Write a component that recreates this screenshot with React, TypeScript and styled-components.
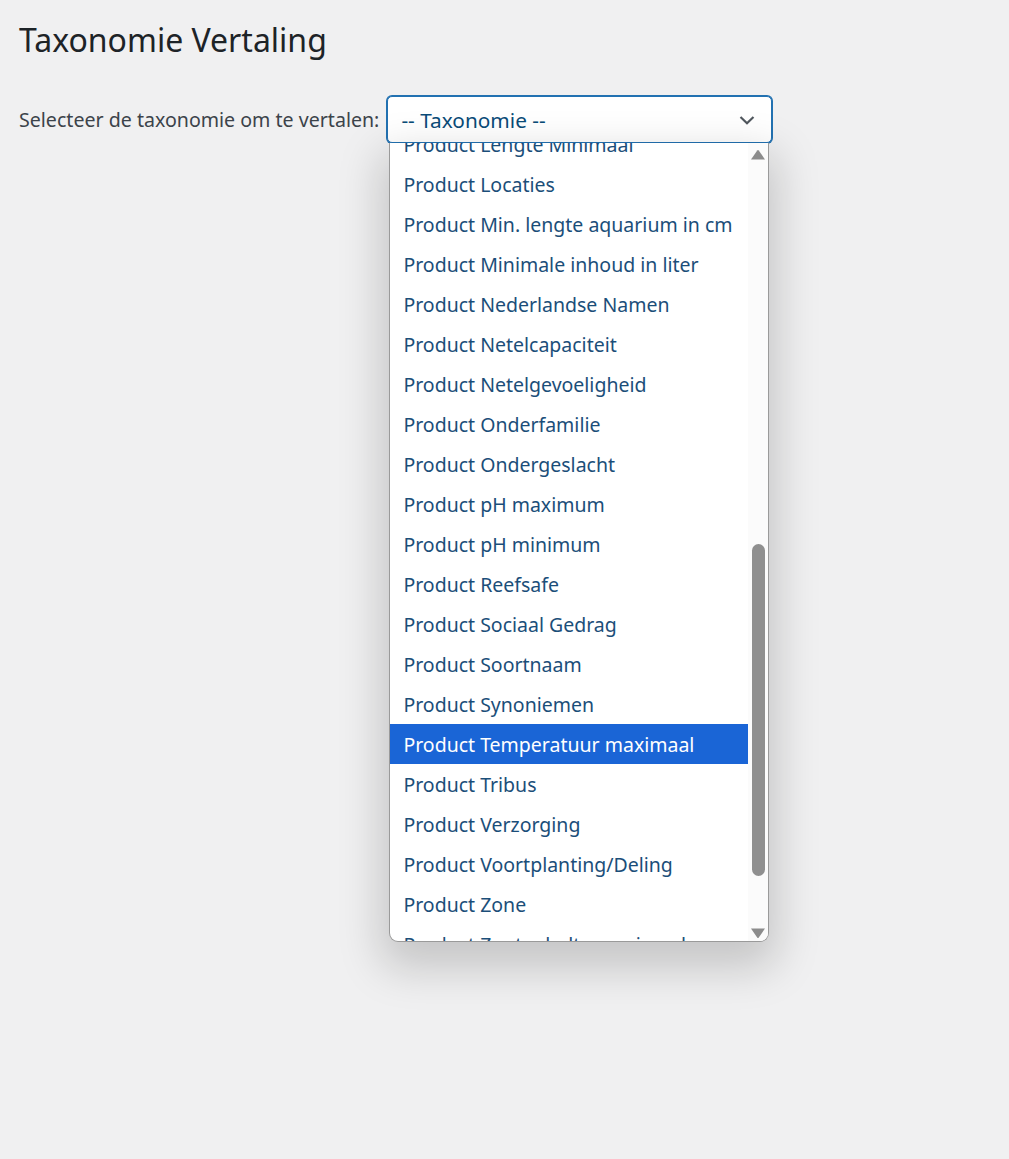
import React from 'react'
import styled, {createGlobalStyle} from 'styled-components'

const GlobalStyle = createGlobalStyle`
  html, body {
    margin: 0;
    padding: 0;
    background: #f0f0f1;
  }
  body {
    font-family: 'Noto Sans', 'Open Sans', sans-serif;
    color: #1d2327;
  }
`

const Page = styled.div`
  min-height: 1159px;
  padding: 12px 19px;
  box-sizing: border-box;
`

const Title = styled.h1`
  margin: 0;
  font-size: 32px;
  font-weight: 400;
  line-height: 56px;
  color: #1d2327;
`

const FormRow = styled.div`
  margin-top: 28px;
  display: flex;
  align-items: center;
  gap: 8px;
`

const Label = styled.label`
  font-size: 19.6px;
  color: #3c434a;
`

const SelectWrap = styled.div`
  position: relative;
  width: 385px;
`

const SelectBox = styled.div`
  height: 47px;
  box-sizing: border-box;
  display: flex;
  align-items: center;
  justify-content: space-between;
  padding: 0 14px 0 13px;
  background: #fff;
  border: 1px solid #2271b1;
  border-radius: 5px;
  box-shadow: 0 0 0 1px #2271b1;
  color: #0a4b78;
  font-size: 20.8px;
`

const Dropdown = styled.div`
  position: absolute;
  top: 100%;
  left: 2px;
  width: 380px;
  height: 799px;
  box-sizing: border-box;
  display: flex;
  background: #fff;
  border: 1px solid #9a9a9a;
  border-top: none;
  border-radius: 0 0 9px 9px;
  overflow: hidden;
  box-shadow: 0 18px 44px 8px rgba(0, 0, 0, 0.18);
`

const OptionList = styled.div`
  flex: 1;
  overflow: hidden;
`

const Options = styled.ul<{$offset: number}>`
  list-style: none;
  margin: ${p => -p.$offset}px 0 0;
  padding: 0;
`

const Option = styled.li<{$selected?: boolean}>`
  height: 40px;
  display: flex;
  align-items: center;
  padding-left: 13px;
  font-size: 19.5px;
  white-space: nowrap;
  color: ${p => (p.$selected ? '#fff' : '#1b4e79')};
  background: ${p => (p.$selected ? '#1a65d6' : 'transparent')};
`

const ScrollBar = styled.div`
  width: 20px;
  display: flex;
  flex-direction: column;
  align-items: center;
  background: #fbfbfb;
  padding: 6px 0 2px;
  box-sizing: border-box;
`

const Track = styled.div`
  flex: 1;
  width: 100%;
  display: flex;
  justify-content: center;
  padding: 4px 0;
`

const Thumb = styled.div<{$top: number; $height: number}>`
  margin-top: ${p => p.$top}px;
  width: 13px;
  height: ${p => p.$height}px;
  border-radius: 7px;
  background: #8f8f8f;
`

const Arrow = ({down}: {down?: boolean}) => (
  <svg width='16' height='12' viewBox='0 0 16 12'>
    <path
      d={down ? 'M1 1.5 H15 L8.8 10.5 Q8 11.5 7.2 10.5 Z' : 'M1 10.5 H15 L8.8 1.5 Q8 0.5 7.2 1.5 Z'}
      fill='#8c8c8c'
    />
  </svg>
)

const Chevron = () => (
  <svg width='20' height='20' viewBox='0 0 20 20'>
    <path d='M3.5 7 L10 13.2 L16.5 7' fill='none' stroke='#50575e' strokeWidth='2.2' />
  </svg>
)

const taxonomies = [
  'Product Lengte Minimaal',
  'Product Locaties',
  'Product Min. lengte aquarium in cm',
  'Product Minimale inhoud in liter',
  'Product Nederlandse Namen',
  'Product Netelcapaciteit',
  'Product Netelgevoeligheid',
  'Product Onderfamilie',
  'Product Ondergeslacht',
  'Product pH maximum',
  'Product pH minimum',
  'Product Reefsafe',
  'Product Sociaal Gedrag',
  'Product Soortnaam',
  'Product Synoniemen',
  'Product Temperatuur maximaal',
  'Product Tribus',
  'Product Verzorging',
  'Product Voortplanting/Deling',
  'Product Zone',
  'Product Zoutgehalte maximaal',
]

const App = (): JSX.Element => {
  const selected = 'Product Temperatuur maximaal'

  return (
    <Page>
      <GlobalStyle />
      <Title>Taxonomie Vertaling</Title>
      <FormRow>
        <Label>Selecteer de taxonomie om te vertalen:</Label>
        <SelectWrap>
          <SelectBox>
            <span>-- Taxonomie --</span>
            <Chevron />
          </SelectBox>
          <Dropdown>
            <OptionList>
              <Options $offset={19}>
                {taxonomies.map(name => (
                  <Option key={name} $selected={name === selected}>{name}</Option>
                ))}
              </Options>
            </OptionList>
            <ScrollBar>
              <Arrow />
              <Track>
                <Thumb $top={379} $height={332} />
              </Track>
              <Arrow down />
            </ScrollBar>
          </Dropdown>
        </SelectWrap>
      </FormRow>
    </Page>
  )
}

export default App
